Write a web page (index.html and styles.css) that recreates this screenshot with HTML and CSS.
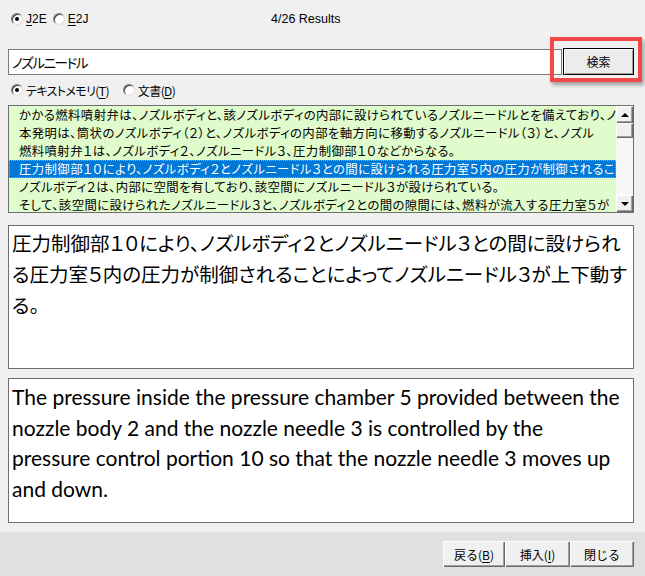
FILE: index.html
```html
<html>
  <head>
    <meta charset="UTF-8" />
    <title>J2E 検索</title>
    <link rel="stylesheet" href="styles.css">
  </head>
  <body>
    <div class="mode">
      <div class="mode_opts">
        <label class="opt"><span class="radio on"></span><span><u>J</u>2E</span></label>
        <label class="opt"><span class="radio"></span><span><u>E</u>2J</span></label>
      </div>
      <span class="count">4/26 Results</span>
    </div>
    <div class="search">
      <div class="search_box">ノズルニードル</div>
      <div class="search_btn_wrap">
        <button class="search_btn">検索</button>
        <span class="mark"></span>
      </div>
    </div>
    <div class="source">
      <label class="opt opt_wide"><span class="radio on"></span><span>テキストメモリ(<u>T</u>)</span></label>
      <label class="opt"><span class="radio"></span><span>文書(<u>D</u>)</span></label>
    </div>
    <div class="list">
      <ul class="rows">
        <li>かかる燃料噴射弁は、ノズルボディと、該ノズルボディの内部に設けられているノズルニードルとを備えており、ノズル</li>
        <li>本発明は、筒状のノズルボディ（２）と、ノズルボディの内部を軸方向に移動するノズルニードル（３）と、ノズル</li>
        <li>燃料噴射弁１は、ノズルボディ２、ノズルニードル３、圧力制御部１０などからなる。</li>
        <li class="sel">圧力制御部１０により、ノズルボディ２とノズルニードル３との間に設けられる圧力室５内の圧力が制御されるこ</li>
        <li>ノズルボディ２は、内部に空間を有しており、該空間にノズルニードル３が設けられている。</li>
        <li>そして、該空間に設けられたノズルニードル３と、ノズルボディ２との間の隙間には、燃料が流入する圧力室５が</li>
      </ul>
      <div class="scroll">
        <span class="sbtn"><i class="arrow up"></i></span>
        <span class="thumb"></span>
        <span class="sbtn sbtn_down"><i class="arrow down"></i></span>
      </div>
    </div>
    <div class="text_jp">圧力制御部１０により、ノズルボディ２とノズルニードル３との間に設けられ<br>る圧力室５内の圧力が制御されることによってノズルニードル３が上下動す<br>る。</div>
    <div class="text_en">The pressure inside the pressure chamber 5 provided between the<br>nozzle body 2 and the nozzle needle 3 is controlled by the<br>pressure control portion 10 so that the nozzle needle 3 moves up<br>and down.</div>
    <div class="bottom">
      <button class="btn btn_back">戻る(<u>B</u>)</button>
      <button class="btn btn_ins">挿入(<u>I</u>)</button>
      <button class="btn btn_close">閉じる</button>
    </div>
  </body>
</html>
```

FILE: styles.css
```css
* {
  margin: 0;
  padding: 0;
  box-sizing: border-box;
}
body {
  width: 645px;
  height: 576px;
  overflow: hidden;
  background: #f0f0f0;
  color: #000;
  font-family: "Liberation Sans", "Noto Sans CJK JP", sans-serif;
  font-size: 12px;
}
li {
  list-style-type: none;
}
u {
  text-decoration-thickness: 1px;
  text-underline-offset: 2px;
}
/* radios */
.mode {
  height: 38px;
  display: flex;
  align-items: center;
  padding-left: 11px;
}
.mode_opts {
  width: 260px;
  display: flex;
}
.count {
  font-size: 12.5px;
}
.opt {
  display: flex;
  align-items: center;
  gap: 3px;
  margin-right: 6px;
}
.opt_wide {
  margin-right: 14px;
}
.radio {
  position: relative;
  width: 12px;
  height: 12px;
  border-radius: 50%;
  background: #fff;
  border: 1px solid;
  border-color: #7a7a7a #dcdcdc #dcdcdc #7a7a7a;
  box-shadow: inset 1px 1px 0 #404040;
}
.radio.on::after {
  content: "";
  position: absolute;
  left: 3px;
  top: 3px;
  width: 4px;
  height: 4px;
  border-radius: 50%;
  background: #000;
}
/* search */
.search {
  display: flex;
  height: 37px;
  padding: 10px 11px 0 8px;
}
.search_box {
  flex: 1;
  height: 26px;
  margin-top: 1px;
  background: #fff;
  border: 1px solid #7a7a7a;
  padding-left: 3px;
  line-height: 24px;
  font-family: "Noto Sans CJK JP", sans-serif;
  font-feature-settings: "palt";
  font-size: 13.5px;
  letter-spacing: -1.4px;
}
.search_btn_wrap {
  position: relative;
  width: 71px;
  margin-left: 1px;
}
.search_btn {
  width: 71px;
  height: 27px;
  background: #ececec;
  border: 1px solid #000;
  box-shadow: inset 1px 1px 0 #fff, inset -1px -1px 0 #a0a0a0;
  font-family: "Noto Sans CJK JP", sans-serif;
  font-size: 12px;
}
.mark {
  position: absolute;
  left: -13px;
  top: -11px;
  right: -8px;
  bottom: -7px;
  border: 4px solid #f24848;
  box-shadow: 2px 3px 4px rgba(0, 0, 0, 0.35);
}
.source {
  height: 30px;
  display: flex;
  align-items: center;
  padding-left: 11px;
  font-family: "Noto Sans CJK JP", sans-serif;
  font-feature-settings: "palt";
  letter-spacing: -0.6px;
}
/* list */
.list {
  display: flex;
  height: 108px;
  margin: 0 11px 0 8px;
  border: 1px solid #6e6e6e;
  background: #e1fccc;
}
.rows {
  flex: 1;
  overflow: hidden;
  font-family: "Noto Sans CJK JP", sans-serif;
  font-feature-settings: "palt";
  font-size: 12.4px;
  letter-spacing: 0.4px;
}
.rows li {
  height: 18px;
  line-height: 18px;
  padding-left: 10px;
  white-space: nowrap;
  overflow: hidden;
}
.rows li.sel {
  background: #0078d7;
  color: #fff;
  outline: 1px dotted #e09a3a;
  outline-offset: -1px;
}
.scroll {
  width: 17px;
  display: flex;
  flex-direction: column;
  background: repeating-conic-gradient(#f0f0f0 0 25%, #fff 0 50%) 0 0 / 2px 2px;
}
.sbtn,
.thumb {
  background: #f0f0f0;
  box-shadow: inset 1px 1px 0 #fff, inset -1px -1px 0 #696969, inset -2px -2px 0 #a0a0a0;
}
.sbtn {
  height: 17px;
  display: flex;
  align-items: center;
  justify-content: center;
}
.sbtn_down {
  margin-top: auto;
}
.thumb {
  height: 15px;
}
.arrow {
  width: 0;
  height: 0;
  border-left: 4px solid transparent;
  border-right: 4px solid transparent;
}
.arrow.up {
  border-bottom: 4px solid #000;
}
.arrow.down {
  border-top: 4px solid #000;
}
/* text panes */
.text_jp,
.text_en {
  margin: 12px 11px 0 8px;
  background: #fff;
  border: 1px solid #6e6e6e;
  overflow: hidden;
  white-space: nowrap;
}
.text_jp {
  height: 144px;
  padding: 1px 0 0 3px;
  font-family: "Noto Sans CJK JP", sans-serif;
  font-feature-settings: "palt";
  font-size: 19.5px;
  line-height: 31px;
}
.text_en {
  height: 145px;
  margin-top: 9px;
  padding: 3px 0 0 3px;
  font-family: Lato, sans-serif;
  font-size: 21px;
  line-height: 30.5px;
}
/* bottom */
.bottom {
  height: 44px;
  margin-top: 9px;
  display: flex;
  justify-content: flex-end;
  padding: 9px 11px 0 0;
  background: #e0e0e0;
}
.btn {
  height: 26px;
  background: #f0f0f0;
  border: none;
  box-shadow: inset 1px 1px 0 #fff, inset -1px -1px 0 #696969, inset -2px -2px 0 #a0a0a0;
  font-family: "Noto Sans CJK JP", sans-serif;
  font-size: 12px;
}
.btn_back {
  width: 62px;
}
.btn_ins {
  width: 65px;
}
.btn_close {
  width: 64px;
}
```
